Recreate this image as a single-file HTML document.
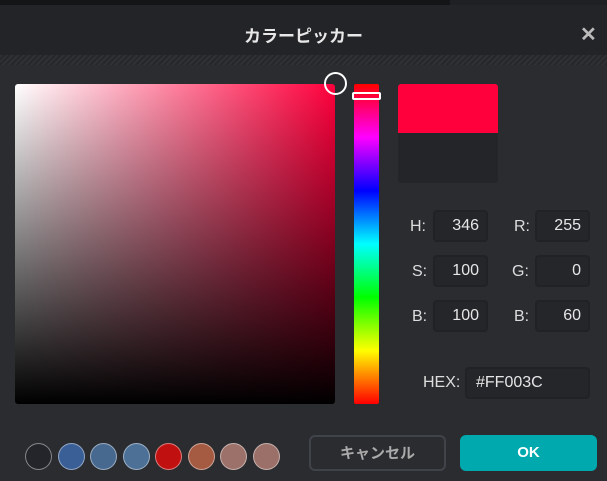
<!DOCTYPE html>
<html><head><meta charset="utf-8"><style>
*{margin:0;padding:0;box-sizing:border-box}
body{width:607px;height:481px;background:#2a2c30;position:relative;overflow:hidden;font-family:"Liberation Sans","Noto Sans CJK JP",sans-serif;color:#e6e6e6}
.top{position:absolute;left:0;top:0;width:607px;height:5px;background:#141517}
.top2{position:absolute;left:450px;top:0;width:157px;height:5px;background:#1f2024}
.hdr{position:absolute;left:0;top:5px;width:607px;height:50px;background:#232428}
.title{position:absolute;left:0;width:607px;top:17px;text-align:center;font-size:17px;font-weight:bold;color:#e8e8e8}
.x{position:absolute;left:580px;top:17px;font-size:20px;font-weight:bold;color:#bbb}
.hatch{position:absolute;left:0;top:55px;width:607px;height:10px;background:repeating-linear-gradient(135deg,#2f3135 0 2px,#25272b 2px 4px)}
.sq{position:absolute;left:15px;top:84px;width:320px;height:320px;border-radius:3px;background:linear-gradient(to bottom,rgba(0,0,0,0),#000),linear-gradient(to right,#fff,#ff003c)}
.circ{position:absolute;left:324px;top:72px;width:23px;height:23px;border:2px solid #fff;border-radius:50%}
.hue{position:absolute;left:354px;top:84px;width:25px;height:320px;border-radius:2px;background:linear-gradient(to bottom,#f00,#f0f 16.7%,#00f 33.3%,#0ff 50%,#0f0 66.7%,#ff0 83.3%,#f00)}
.thumb{position:absolute;left:352px;top:92px;width:29px;height:8px;border:2px solid #fff;border-radius:2px}
.sw1{position:absolute;left:398px;top:84px;width:100px;height:49px;background:#ff003c;border-radius:3px 3px 0 0}
.sw2{position:absolute;left:398px;top:133px;width:100px;height:50px;background:#232529;border-radius:0 0 3px 3px}
.lbl{position:absolute;font-size:16px;color:#ddd}
.in{position:absolute;height:32px;border:2px solid #202226;background:#24262a;border-radius:4px;font-size:16px;color:#e6e6e6;text-align:right;padding-right:7px;line-height:28px}
.c{position:absolute;top:443px;width:27px;height:27px;border-radius:50%;border:1px solid rgba(255,255,255,.45)}
.btn{position:absolute;top:435px;height:36px;border-radius:6px;font-size:15px;font-weight:bold;text-align:center;line-height:33px}
</style></head><body>
<div class="top"></div><div class="top2"></div>
<div class="hdr"><div class="title">カラーピッカー</div><div class="x">✕</div></div>
<div class="hatch"></div>
<div class="sq"></div><div class="circ"></div>
<div class="hue"></div><div class="thumb"></div>
<div class="sw1"></div><div class="sw2"></div>
<div class="lbl" style="left:410px;top:218px">H:</div>
<div class="lbl" style="left:412px;top:263px">S:</div>
<div class="lbl" style="left:412px;top:308px">B:</div>
<div class="lbl" style="left:514px;top:218px">R:</div>
<div class="lbl" style="left:512px;top:263px">G:</div>
<div class="lbl" style="left:514px;top:308px">B:</div>
<div class="lbl" style="left:423px;top:374px">HEX:</div>
<div class="in" style="left:433px;top:210px;width:55px">346</div>
<div class="in" style="left:433px;top:255px;width:55px">100</div>
<div class="in" style="left:433px;top:300px;width:55px">100</div>
<div class="in" style="left:535px;top:210px;width:55px">255</div>
<div class="in" style="left:535px;top:255px;width:55px">0</div>
<div class="in" style="left:535px;top:300px;width:55px">60</div>
<div class="in" style="left:465px;top:367px;width:125px;text-align:left;padding-left:9px">#FF003C</div>
<div class="c" style="left:25px;background:#23252a"></div>
<div class="c" style="left:58px;background:#3a5f96"></div>
<div class="c" style="left:90px;background:#48698f"></div>
<div class="c" style="left:123px;background:#4d7096"></div>
<div class="c" style="left:155px;background:#c01010"></div>
<div class="c" style="left:188px;background:#a55a42"></div>
<div class="c" style="left:220px;background:#9c716a"></div>
<div class="c" style="left:253px;background:#9a7068"></div>
<div class="btn" style="left:309px;width:137px;border:2px solid #40434a;color:#aaa">キャンセル</div>
<div class="btn" style="left:460px;width:137px;background:#00a9ad;color:#fff;line-height:36px">OK</div>
</body></html>
